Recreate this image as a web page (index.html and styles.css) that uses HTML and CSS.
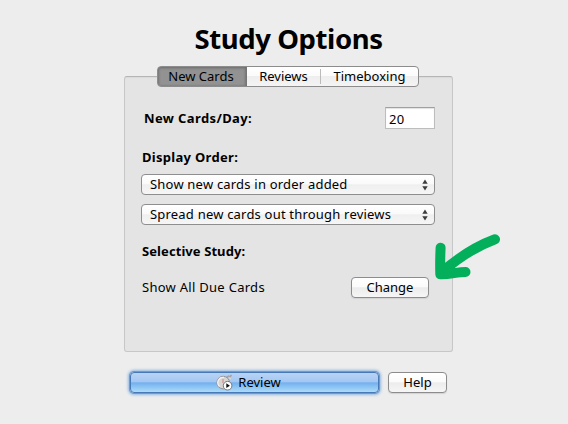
FILE: index.html
```html
<!DOCTYPE html>
<html lang="en">
<head>
<meta charset="utf-8">
<title>Study Options</title>
<link rel="stylesheet" href="styles.css">
</head>
<body>
<main class="dialog">
  <h1 class="title"><span>Study Options</span></h1>
  <nav class="tabs">
    <button class="tab tab-active">New Cards</button>
    <button class="tab tab-reviews">Reviews</button>
    <button class="tab tab-time">Timeboxing</button>
  </nav>
  <section class="panel">
    <div class="row row-limit">
      <label class="label label-limit" for="limit">New Cards/Day:</label>
      <input class="limit" id="limit" value="20">
    </div>
    <h2 class="label label-order">Display Order:</h2>
    <div class="popup"><span>Show new cards in order added</span>
      <svg class="arrows" width="6" height="12" viewBox="0 0 6 12"><path d="M3 .6 5.7 4.8H.3zM3 11.4 5.7 7.2H.3z"/></svg>
    </div>
    <div class="popup"><span>Spread new cards out through reviews</span>
      <svg class="arrows" width="6" height="12" viewBox="0 0 6 12"><path d="M3 .6 5.7 4.8H.3zM3 11.4 5.7 7.2H.3z"/></svg>
    </div>
    <h2 class="label label-study">Selective Study:</h2>
    <div class="row row-study">
      <span class="due">Show All Due Cards</span>
      <button class="button change">Change</button>
    </div>
  </section>
  <footer class="actions">
    <button class="button review">
      <svg class="watch" width="18" height="17" viewBox="0 0 18 17">
        <path d="M11 3.300 12.500 2.300M14.200 2.600 15 1.400" stroke="#a3a3a8" stroke-width="1.800" stroke-linecap="round"/>
        <path d="M12.500 3.800 15 4.800" stroke="#d9d9dc" stroke-width="1.400"/>
        <circle cx="7.200" cy="8.600" r="6.300" fill="#d7d4d2" stroke="#939398"/>
        <path d="M3.500 12.500A5.300 5.300 0 0 1 8 3.400" fill="none" stroke="#f3f1ef" stroke-width="1.300"/>
        <path d="M7 5v4" stroke="#cf8580"/>
        <circle cx="11.600" cy="11.700" r="4.300" fill="#fff" stroke="#77777c"/>
        <path d="M10.300 9.300v4.800l3.600-2.400z" fill="#111"/>
      </svg>
      <span>Review</span>
    </button>
    <button class="button help">Help</button>
  </footer>
  <svg class="pointer" width="70" height="52" viewBox="0 0 70 52">
    <path d="M62 9.300C44 16 25 28 9 42M7.600 17.700C7.200 26 7 35 7.300 44.200C16 44.700 24 42 32.500 42" fill="none" stroke="#03af5b" stroke-width="10" stroke-linecap="round" stroke-linejoin="round"/>
  </svg>
</main>
</body>
</html>
```
FILE: styles.css
```css
* { box-sizing: border-box; }
body {
  margin: 0;
  width: 568px;
  height: 424px;
  overflow: hidden;
  background: #ededed;
  color: #000;
  font: 13px/16px "Noto Sans", "Open Sans", sans-serif;
}
button, input { font: inherit; color: inherit; letter-spacing: inherit; margin: 0; padding: 0; }
.dialog { position: relative; width: 329px; margin-left: 124px; padding-top: 21px; }
.title { margin: 0; height: 45px; font-size: 27.5px; line-height: 36px; font-weight: 700; text-align: center; white-space: nowrap; letter-spacing: -.4px; }
.tabs {
  position: relative;
  z-index: 1;
  display: flex;
  width: 262px;
  height: 21px;
  margin: 0 0 -11px 33px;
  border: 1px solid #8c8c8c;
  border-radius: 4px;
  overflow: hidden;
  background: linear-gradient(#fff 0%, #fbfbfb 45%, #eee 50%, #f4f4f4 100%);
}
.tab { height: 19px; border: 0; background: none; white-space: nowrap; line-height: 19px; }
.tab-active { width: 89px; padding-right: 2px; background: #929292; border-right: 1px solid #757575; box-shadow: inset 0 1px 3px #6c6c6c, inset 1px 0 2px #828282, inset -1px 0 2px #828282; }
.tab-reviews { width: 74px; padding-right: 1px; background: linear-gradient(#bbb, #bbb) right center / 1px 15px no-repeat; }
.tab-time { flex: 1; }
.panel { height: 276px; padding: 30px 17px 0 17px; border: 1px solid #c7c7c7; border-top-color: #b5b5b5; border-radius: 3px; background: #e4e4e4; box-shadow: inset 0 1px 1px #dadada; }
.label { margin: 0; font-size: 13px; line-height: 16px; font-weight: 700; white-space: nowrap; }
.row { display: flex; align-items: center; justify-content: space-between; }
.row-limit { height: 22px; padding-left: 2px; }
.label-limit { letter-spacing: .38px; }
.limit { width: 50px; height: 22px; padding: 2px 0 0 3px; border: 1px solid #bdbdbd; border-top-color: #a0a0a0; background: #fff; box-shadow: inset 0 1px 1px #e2e2e2; outline: 0; letter-spacing: .3px; }
.label-order { margin: 20px 0 9px; letter-spacing: .3px; }
.popup { display: flex; align-items: center; justify-content: space-between; width: 294px; height: 21px; margin: 0 0 9px -1px; padding: 0 6px 0 8px; border: 1px solid #8e8e8e; border-radius: 4px; background: linear-gradient(#fff, #fafafa 45%, #efefef 52%, #f6f6f6); white-space: nowrap; letter-spacing: .2px; }
.popup span { margin-top: -1px; }
.arrows { fill: #3c3c3c; }
.label-study { margin-top: 18px; letter-spacing: .08px; }
.row-study { margin-top: 18px; height: 21px; padding-right: 6px; }
.due { margin-top: -2px; letter-spacing: .28px; }
.button { height: 21px; border: 1px solid #8c8c8c; border-radius: 4px; background: linear-gradient(#fff, #fbfbfb 45%, #ececec 52%, #f6f6f6); box-shadow: 0 1px 1px #d2d2d2; line-height: 19px; }
.change { width: 78px; }
.actions { display: flex; align-items: center; gap: 9px; padding: 20px 0 0 6px; }
.review { display: flex; align-items: center; justify-content: center; gap: 4px; width: 249px; height: 21px; padding-right: 12px; border-color: #4778b8; background: linear-gradient(#b9d3f4, #a3c7f2 46%, #72b0ee 52%, #addcf9 100%); box-shadow: 0 0 0 1px #699cd4, 0 0 3px 2px #91b9df; }
.help { width: 59px; }
.pointer { position: absolute; left: 309px; top: 230px; }
```
